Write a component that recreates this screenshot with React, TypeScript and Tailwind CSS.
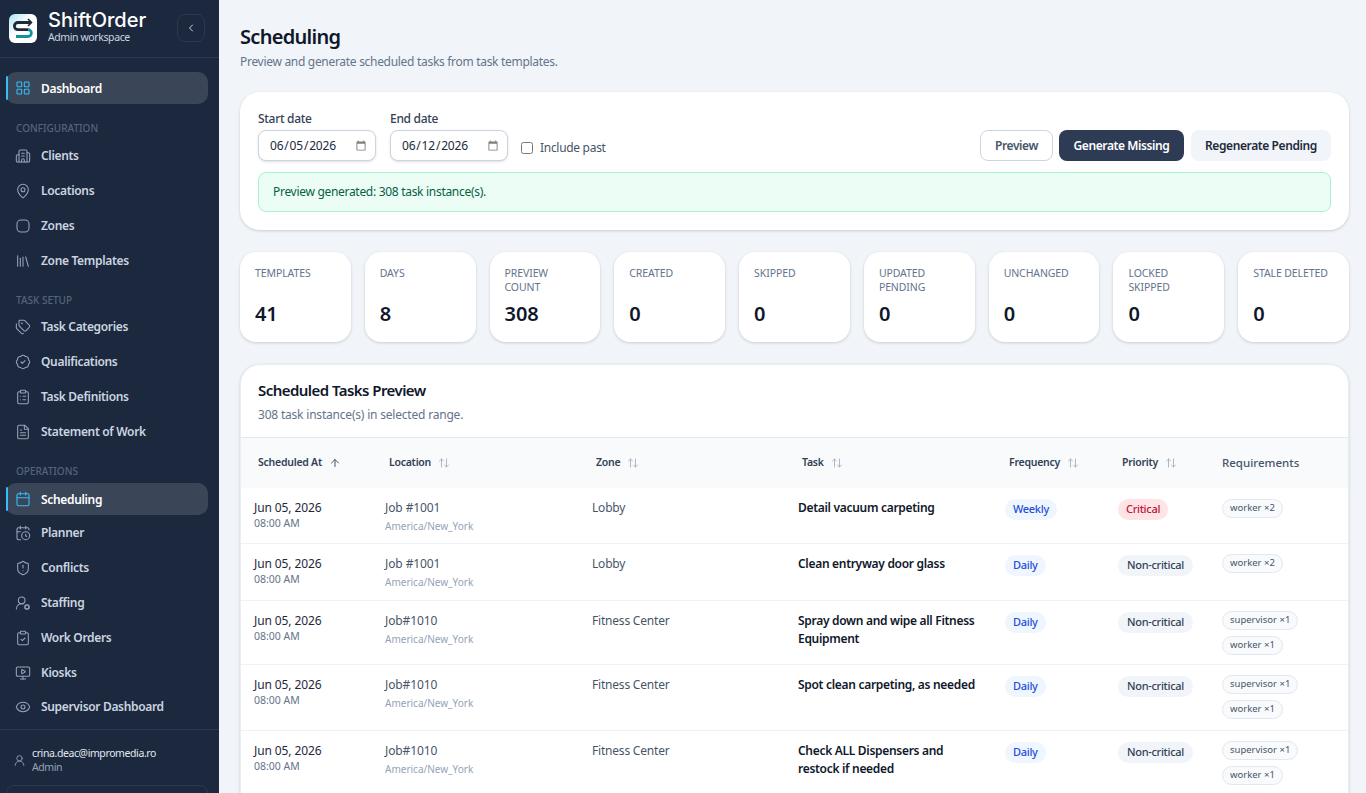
import {
  ArrowUp,
  ArrowUpDown,
  BadgeCheck,
  Building2,
  Calendar,
  CalendarClock,
  ChevronLeft,
  ClipboardCheck,
  ClipboardList,
  Eye,
  FileText,
  LayoutGrid,
  Library,
  MapPin,
  MonitorPlay,
  ShieldAlert,
  Tags,
  UserRound,
  UserRoundCog,
} from 'lucide-react';
import type { ComponentType } from 'react';

type IconProps = { size?: number; strokeWidth?: number; className?: string };
type NavItem = { label: string; icon: ComponentType<IconProps>; active?: boolean };

function ZoneIcon({ size, strokeWidth, className }: IconProps) {
  return (
    <svg width={size} height={size} viewBox="0 0 24 24" fill="none" stroke="currentColor" strokeWidth={strokeWidth} className={className}>
      <rect x="3" y="3" width="18" height="18" rx="6" />
    </svg>
  );
}

const navGroups: { title?: string; spacing?: string; titleGap?: string; itemHeight: string; items: NavItem[] }[] = [
  { itemHeight: 'h-[35px]', items: [{ label: 'Dashboard', icon: LayoutGrid, active: true }] },
  {
    title: 'CONFIGURATION',
    spacing: 'mt-[17px]',
    titleGap: 'mb-[4px]',
    itemHeight: 'h-[35px]',
    items: [
      { label: 'Clients', icon: Building2 },
      { label: 'Locations', icon: MapPin },
      { label: 'Zones', icon: ZoneIcon },
      { label: 'Zone Templates', icon: Library },
    ],
  },
  {
    title: 'TASK SETUP',
    spacing: 'mt-[14px]',
    titleGap: 'mb-[3px]',
    itemHeight: 'h-[35px]',
    items: [
      { label: 'Task Categories', icon: Tags },
      { label: 'Qualifications', icon: BadgeCheck },
      { label: 'Task Definitions', icon: ClipboardList },
      { label: 'Statement of Work', icon: FileText },
    ],
  },
  {
    title: 'OPERATIONS',
    spacing: 'mt-[14px]',
    titleGap: 'mb-[5px]',
    itemHeight: 'h-[34.8px]',
    items: [
      { label: 'Scheduling', icon: Calendar, active: true },
      { label: 'Planner', icon: CalendarClock },
      { label: 'Conflicts', icon: ShieldAlert },
      { label: 'Staffing', icon: UserRoundCog },
      { label: 'Work Orders', icon: ClipboardCheck },
      { label: 'Kiosks', icon: MonitorPlay },
      { label: 'Supervisor Dashboard', icon: Eye },
    ],
  },
];

const stats = [
  { label: 'TEMPLATES', value: '41' },
  { label: 'DAYS', value: '8' },
  { label: 'PREVIEW COUNT', value: '308' },
  { label: 'CREATED', value: '0' },
  { label: 'SKIPPED', value: '0' },
  { label: 'UPDATED PENDING', value: '0' },
  { label: 'UNCHANGED', value: '0' },
  { label: 'LOCKED SKIPPED', value: '0' },
  { label: 'STALE DELETED', value: '0' },
];

const rows = [
  { job: 'Job #1001', zone: 'Lobby', task: 'Detail vacuum carpeting', freq: 'Weekly', priority: 'Critical', reqs: ['worker ×2'], h: 'h-[55px]' },
  { job: 'Job #1001', zone: 'Lobby', task: 'Clean entryway door glass', freq: 'Daily', priority: 'Non-critical', reqs: ['worker ×2'], h: 'h-[57px]' },
  { job: 'Job#1010', zone: 'Fitness Center', task: 'Spray down and wipe all Fitness Equipment', freq: 'Daily', priority: 'Non-critical', reqs: ['supervisor ×1', 'worker ×1'], h: 'h-[64px]' },
  { job: 'Job#1010', zone: 'Fitness Center', task: 'Spot clean carpeting, as needed', freq: 'Daily', priority: 'Non-critical', reqs: ['supervisor ×1', 'worker ×1'], h: 'h-[66px]' },
  { job: 'Job#1010', zone: 'Fitness Center', task: 'Check ALL Dispensers and restock if needed', freq: 'Daily', priority: 'Non-critical', reqs: ['supervisor ×1', 'worker ×1'], h: 'h-[65px]' },
];

const columns = [
  { label: 'Scheduled At', width: 'w-[131px]' },
  { label: 'Location', width: 'w-[207px]' },
  { label: 'Zone', width: 'w-[206px]' },
  { label: 'Task', width: 'w-[207px]' },
  { label: 'Frequency', width: 'w-[113px]' },
  { label: 'Priority', width: 'w-[104px]' },
];

function Logo() {
  return (
    <svg width="28" height="29" viewBox="0 0 28 29" className="shrink-0">
      <defs>
        <linearGradient id="logoBg" x1="0" y1="0" x2="1" y2="1">
          <stop offset="0" stopColor="#a9e6f2" />
          <stop offset="0.45" stopColor="#ffffff" />
        </linearGradient>
      </defs>
      <rect width="28" height="29" rx="6" fill="url(#logoBg)" />
      <path d="M22 8.5H9a3.6 3.6 0 0 0 0 7.2h10" fill="none" stroke="#1f2937" strokeWidth="2.8" />
      <path d="M19 5l3.5 3.5-3.5 3.5" fill="none" stroke="#1f2937" strokeWidth="1.6" />
      <path d="M19 15.7a3.4 3.4 0 0 1 0 6.8H7" fill="none" stroke="#12939b" strokeWidth="2.8" />
    </svg>
  );
}

function Sidebar() {
  return (
    <aside className="flex h-full w-[219px] shrink-0 flex-col overflow-hidden bg-[#1c283d]">
      <div className="flex h-[58px] shrink-0 items-center border-b border-[#2c3950] pl-[9px] pr-[14px] pb-[1px]">
        <Logo />
        <div className="mb-[3px] ml-[11px] min-w-0 flex-1">
          <div className="font-['Inter',sans-serif] text-[20px] font-medium leading-[20px] tracking-[0px] text-white">ShiftOrder</div>
          <div className="mt-[1px] text-[10.5px] leading-[13px] tracking-[-0.4px] text-[#cbd5e1]">Admin workspace</div>
        </div>
        <button className="flex h-[28px] w-[28px] items-center justify-center rounded-lg border border-[#2c3950] text-[#cbd5e1]">
          <ChevronLeft size={12} />
        </button>
      </div>
      <nav className="flex-1 pl-[6px] pr-[11px] pt-[12px]">
        {navGroups.map((group, i) => (
          <div key={i} className={group.spacing}>
            {group.title && (
              <div className={`${group.titleGap} pl-[10px] text-[10px] font-medium leading-[14px] tracking-[0px] text-[#55647c]`}>{group.title}</div>
            )}
            {group.items.map((item) => {
              const Icon = item.icon;
              return (
                <div
                  key={item.label}
                  className={
                    item.active
                      ? 'relative my-[1.5px] flex h-[32px] items-center rounded-[10px] bg-[#3a4557] pl-[9px] text-[12px] font-semibold tracking-[-0.33px] text-white'
                      : `${group.itemHeight} flex items-center pl-[9px] text-[12px] font-semibold tracking-[-0.33px] text-[#cbd5e1]`
                  }
                >
                  {item.active && <span className="absolute left-0 top-[4px] h-[24px] w-[2px] rounded-full bg-[#38bdf8]" />}
                  <Icon size={16} strokeWidth={1.6} className={item.active ? 'text-[#38bdf8]' : 'text-[#94a3b8]'} />
                  <span className={item.active ? 'ml-[10px] pt-[2px]' : 'ml-[10px]'}>{item.label}</span>
                </div>
              );
            })}
          </div>
        ))}
      </nav>
      <div className="h-[64px] shrink-0 border-t border-[#2c3950] pl-[6px] pr-[11px] pt-[16px]">
        <div className="flex items-center">
          <UserRound size={13} strokeWidth={1.6} className="ml-[7px] text-[#94a3b8]" />
          <div className="ml-[6px]">
            <div className="text-[10.5px] leading-[14px] tracking-[-0.4px] text-[#e2e8f0]">crina.deac@impromedia.ro</div>
            <div className="text-[10.5px] leading-[14px] tracking-[-0.4px] text-[#94a3b8]">Admin</div>
          </div>
        </div>
        <div className="mt-[11px] h-[36px] rounded-lg border border-[#2c3950]" />
      </div>
    </aside>
  );
}

function SortHeader({ label, sorted }: { label: string; sorted?: boolean }) {
  return (
    <span className="flex items-center gap-[7px] pl-[4px] text-[10.5px] font-semibold tracking-[-0.25px] text-[#334155]">
      {label}
      {sorted ? <ArrowUp size={12} className="text-[#475569]" /> : <ArrowUpDown size={12} strokeWidth={1.5} className="text-[#94a3b8]" />}
    </span>
  );
}

export default function App() {
  return (
    <div className="flex h-screen overflow-hidden bg-[#f1f5f9] font-['Noto_Sans',sans-serif] tracking-[-0.3px]">
      <Sidebar />
      <main className="min-w-0 flex-1 overflow-hidden pl-[21px] pr-[17px] pt-[23px]">
        <h1 className="text-[20px] font-semibold leading-[28px] tracking-[-0.7px] text-[#0f172a]">Scheduling</h1>
        <p className="mt-[2px] text-[12px] leading-[18px] text-[#64748b]">Preview and generate scheduled tasks from task templates.</p>

        <section className="mt-[21px] h-[138px] rounded-[20px] bg-white px-[18px] pt-[19px] shadow-[0_1px_3px_rgba(15,23,42,0.18)]">
          <div className="flex items-end">
            <label className="block w-[118px] text-[12px] font-medium text-[#334155]">
              <span className="mb-[3px] block leading-[16px]">Start date</span>
              <input type="date" defaultValue="2026-06-05" className="h-[31px] w-full rounded-lg border border-[#cbd5e1] bg-white pl-[10px] pr-[6px] text-[12px] font-normal tracking-[-0.2px] text-[#1e293b] shadow-sm [&::-webkit-calendar-picker-indicator]:opacity-50" />
            </label>
            <label className="ml-[14px] block w-[118px] text-[12px] font-medium text-[#334155]">
              <span className="mb-[3px] block leading-[16px]">End date</span>
              <input type="date" defaultValue="2026-06-12" className="h-[31px] w-full rounded-lg border border-[#cbd5e1] bg-white pl-[10px] pr-[6px] text-[12px] font-normal tracking-[-0.2px] text-[#1e293b] shadow-sm [&::-webkit-calendar-picker-indicator]:opacity-50" />
            </label>
            <label className="mb-[4px] ml-[13px] flex items-center gap-[7px] text-[12px] text-[#475569]">
              <input type="checkbox" className="h-[12px] w-[12px]" />
              Include past
            </label>
            <div className="ml-auto flex tracking-[-0.4px]">
              <button className="h-[31px] w-[73px] rounded-lg border border-[#cbd5e1] bg-white text-[12px] font-semibold text-[#475569]">Preview</button>
              <button className="ml-[6px] h-[31px] w-[125px] rounded-lg bg-[#2d3b55] text-[12px] font-semibold text-white">Generate Missing</button>
              <button className="ml-[7px] h-[31px] w-[140px] rounded-lg bg-[#f1f5f9] text-[12px] font-semibold text-[#1e293b]">Regenerate Pending</button>
            </div>
          </div>
          <div className="mt-[11px] flex h-[40px] items-center rounded-lg border border-[#a7f3d0] bg-[#ecfdf5] pl-[14px] text-[12px] text-[#065f46]">
            Preview generated: 308 task instance(s).
          </div>
        </section>

        <section className="mt-[22px] grid grid-cols-9 gap-[14px]">
          {stats.map((stat) => (
            <div key={stat.label} className="h-[90px] rounded-[16px] bg-white pl-[15px] pr-[18px] pt-[14px] tracking-[-0.1px] shadow-[0_1px_3px_rgba(15,23,42,0.18)]">
              <div className="h-[28px] text-[10.5px] leading-[14px] text-[#64748b]">{stat.label}</div>
              <div className="mt-[5px] text-[20px] font-semibold leading-[30px] text-[#0f172a]">{stat.value}</div>
            </div>
          ))}
        </section>

        <section className="mt-[22px] overflow-hidden rounded-t-[20px] border border-[#e9eef4] bg-white shadow-[0_1px_3px_rgba(15,23,42,0.18)]">
          <div className="h-[73px] border-b border-[#e2e8f0] px-[17px] pt-[14px]">
            <h2 className="text-[15px] font-semibold leading-[22px] tracking-[-0.55px] text-[#0f172a]">Scheduled Tasks Preview</h2>
            <p className="mt-[6px] text-[12px] leading-[16px] tracking-[-0.2px] text-[#64748b]">308 task instance(s) in selected range.</p>
          </div>
          <table className="w-full table-fixed border-collapse">
            <thead>
              <tr className="h-[50px] bg-[#f8fafc]">
                {columns.map((col, i) => (
                  <th key={col.label} className={`${col.width} pl-[13px] text-left align-middle`}>
                    <SortHeader label={col.label} sorted={i === 0} />
                  </th>
                ))}
                <th className="pl-[13px] text-left text-[11.5px] font-medium tracking-[0px] text-[#475569]">Requirements</th>
              </tr>
            </thead>
            <tbody>
              {rows.map((row, i) => (
                <tr key={i} className={`${row.h} border-b border-[#eef2f6] align-top`}>
                  <td className="pl-[13px] pt-[11px]">
                    <div className="text-[12px] leading-[17px] tracking-[-0.1px] text-[#1e293b]">Jun 05, 2026</div>
                    <div className="text-[10.5px] leading-[14px] tracking-[0px] text-[#64748b]">08:00 AM</div>
                  </td>
                  <td className="pl-[13px] pt-[11px]">
                    <div className="text-[12px] leading-[18px] tracking-[-0.1px] text-[#475569]">{row.job}</div>
                    <div className="mt-[2px] text-[10px] leading-[14px] tracking-[0px] text-[#94a3b8]">America/New_York</div>
                  </td>
                  <td className="pl-[13px] pt-[11px] text-[12px] leading-[18px] tracking-[-0.2px] text-[#475569]">{row.zone}</td>
                  <td className="pl-[13px] pr-[6px] pt-[11px] text-[12px] font-semibold leading-[18px] text-[#0f172a]">{row.task}</td>
                  <td className="pl-[13px] pt-[11px]">
                    <span className="flex h-[21px] w-fit items-center rounded-full bg-[#eff6ff] px-[8px] text-[11px] font-medium text-[#1d4ed8]">{row.freq}</span>
                  </td>
                  <td className="pl-[13px] pt-[11px]">
                    <span className={row.priority === 'Critical' ? 'flex h-[21px] w-fit items-center rounded-full bg-[#ffe4e6] px-[8px] text-[11px] font-medium text-[#be123c]' : 'flex h-[21px] w-fit items-center rounded-full bg-[#f1f5f9] px-[9px] text-[11px] font-medium text-[#334155]'}>{row.priority}</span>
                  </td>
                  <td className="pl-[13px] pt-[10.5px]">
                    <div className="flex flex-col items-start gap-[6px]">
                      {row.reqs.map((req) => (
                        <span key={req} className="flex h-[19px] items-center rounded-full border border-[#e2e8f0] bg-[#f8fafc] px-[7px] text-[9.5px] tracking-[0px] text-[#475569]">{req}</span>
                      ))}
                    </div>
                  </td>
                </tr>
              ))}
            </tbody>
          </table>
        </section>
      </main>
    </div>
  );
}
